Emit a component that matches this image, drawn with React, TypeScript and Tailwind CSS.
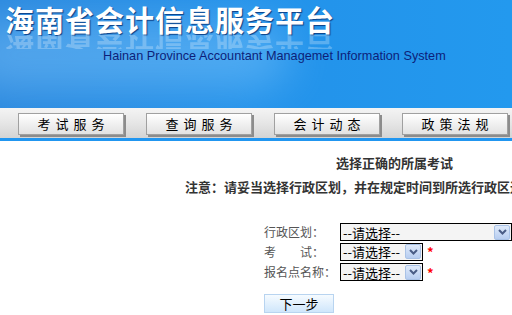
import React from 'react';

const cjk = { fontFamily: '"SimSun", "Noto Sans CJK SC", sans-serif' };

function NavButton({ label }: { label: string }) {
  return (
    <div className="flex h-[22px] w-[106px] items-center justify-center border border-[#a0a0a0] bg-gradient-to-b from-white to-[#e2e2e2] shadow-[2px_2px_0_#8c8c8c] text-[13px] tracking-[5px] text-black">
      <span className="pl-[5px]">{label}</span>
    </div>
  );
}

function FakeSelect({ wide }: { wide?: boolean }) {
  return (
    <div
      className={`flex h-[18px] items-center justify-between border border-black bg-[#f4f4f4] pl-[2px] pr-[1px] ${
        wide ? 'w-[172px]' : 'w-[83px]'
      }`}
    >
      <span className="text-[13px] leading-none text-black">--请选择--</span>
      <span className="flex h-[15px] w-[16px] items-center justify-center rounded-[2px] border border-[#a9c2e6] bg-gradient-to-b from-[#dfeafa] to-[#b7cdf0]">
        <svg width="9" height="6" viewBox="0 0 9 6">
          <path d="M1 1 L4.5 4.5 L8 1" fill="none" stroke="#4a5d86" strokeWidth="2" />
        </svg>
      </span>
    </div>
  );
}

export default function App() {
  const title = '海南省会计信息服务平台';
  return (
    <div className="h-[315px] w-[512px] overflow-hidden bg-white" style={cjk}>
      {/* header */}
      <div className="relative h-[108px] overflow-hidden bg-gradient-to-r from-[#2a88de] via-[#2392ea] to-[#2399ee]">
        <div className="absolute left-[-40px] top-[20px] h-[70px] w-[330px] rounded-full bg-[#8fd0ff] opacity-40 blur-[22px]" />
        <div className="relative pl-[5px] pt-[3px]" style={{ fontFamily: '"Noto Sans CJK SC", sans-serif' }}>
          <div className="whitespace-nowrap text-[29px] font-bold leading-[32px] tracking-[1px] text-white [text-shadow:1px_1px_1px_#0b3f86]">
            {title}
          </div>
          <div aria-hidden className="h-[14px] overflow-hidden opacity-25">
            <div className="whitespace-nowrap text-[29px] font-bold leading-[32px] tracking-[1px] text-white [transform:scaleY(-1)] -mt-[4px]">
              {title}
            </div>
          </div>
        </div>
        <div
          className="relative pl-[103px] pt-[0px] text-[12.7px] leading-[15px] text-[#0d1f7a]"
          style={{ fontFamily: '"Liberation Sans", Arial, sans-serif' }}
        >
          Hainan Province Accountant Managemet Information System
        </div>
      </div>

      {/* nav */}
      <div className="flex h-[30px] items-center gap-[22px] bg-gradient-to-b from-[#f4f4f4] via-[#e6e6e6] to-[#d4d4d4] pl-[18px] pt-[1px]">
        <NavButton label="考试服务" />
        <NavButton label="查询服务" />
        <NavButton label="会计动态" />
        <NavButton label="政策法规" />
      </div>
      <div className="h-[3px] bg-[#2196f0]" />

      {/* content */}
      <div className="pl-[336px] pt-[15px] text-[13px] font-bold leading-[14px] text-[#333]">
        选择正确的所属考试
      </div>
      <div className="whitespace-nowrap pl-[185px] pt-[10px] text-[13px] font-bold leading-[14px] text-[#333]">
        注意：请妥当选择行政区划，并在规定时间到所选行政区进行报名
      </div>

      <div className="flex flex-col gap-[1px] pl-[264px] pt-[29px] text-[12px] text-[#555]">
        <div className="flex items-center">
          <span className="w-[76px] whitespace-nowrap leading-[18px]">行政区划：</span>
          <FakeSelect wide />
        </div>
        <div className="flex items-center">
          <span className="w-[76px] whitespace-nowrap leading-[18px]">考　　试：</span>
          <FakeSelect />
          <span className="ml-[4px] text-[13px] font-bold text-[#ff0000]">*</span>
        </div>
        <div className="flex items-center">
          <span className="w-[76px] whitespace-nowrap leading-[18px]">报名点名称：</span>
          <FakeSelect />
          <span className="ml-[4px] text-[13px] font-bold text-[#ff0000]">*</span>
        </div>
      </div>

      <div className="pl-[264px] pt-[12px]">
        <div className="flex h-[19px] w-[70px] items-center justify-center border border-[#b8d4f0] bg-gradient-to-b from-[#f6fbff] to-[#cfe6fb] text-[13px] text-black">
          下一步
        </div>
      </div>
    </div>
  );
}
